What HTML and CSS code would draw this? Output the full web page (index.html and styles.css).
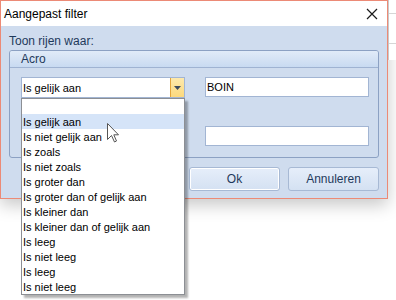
FILE: index.html
```html
<!DOCTYPE html>
<html lang="nl">
<head>
    <meta charset="UTF-8">
    <title>Aangepast filter</title>
    <link rel="stylesheet" href="styles.css">
</head>
<body>
    <div class="backwin"></div>
    <div class="dialog">
        <div class="titlebar">
            <span class="title">Aangepast filter</span>
            <svg class="close" width="12" height="12" viewBox="0 0 12 12">
                <path d="M1 1 L11 11 M11 1 L1 11" stroke="#1b1b1b" stroke-width="1.2" fill="none"/>
            </svg>
        </div>
        <div class="content">
            <div class="label">Toon rijen waar:</div>
            <div class="group">
                <div class="group-head">Acro</div>
                <div class="group-body">
                    <div class="row">
                        <div class="combo">
                            <span class="combo-text">Is gelijk aan</span>
                            <span class="combo-btn">
                                <svg width="7" height="4" viewBox="0 0 7 4"><path d="M0 0 H7 L3.5 4 Z" fill="#3d4b5e"/></svg>
                            </span>
                            <ul class="dropdown">
                                <li class="empty"></li>
                                <li class="selected">Is gelijk aan</li>
                                <li>Is niet gelijk aan</li>
                                <li>Is zoals</li>
                                <li>Is niet zoals</li>
                                <li>Is groter dan</li>
                                <li>Is groter dan of gelijk aan</li>
                                <li>Is kleiner dan</li>
                                <li>Is kleiner dan of gelijk aan</li>
                                <li>Is leeg</li>
                                <li>Is niet leeg</li>
                                <li>Is leeg</li>
                                <li>Is niet leeg</li>
                            </ul>
                        </div>
                        <div class="input">BOIN</div>
                    </div>
                    <div class="row second">
                        <div class="spacer"></div>
                        <div class="input"></div>
                    </div>
                </div>
            </div>
            <div class="buttons">
                <button class="btn default">Ok</button>
                <button class="btn">Annuleren</button>
            </div>
        </div>
    </div>
    <svg class="cursor" width="13" height="20" viewBox="0 0 13 20">
        <path d="M0.5 0.5 L0.5 16.5 L4.5 12.5 L7.5 19 L9.5 18 L6.8 11.8 L11.5 11.8 Z" fill="#fff" stroke="#555" stroke-width="1"/>
    </svg>
</body>
</html>
```

FILE: styles.css
```css
body {
    margin: 0;
    width: 396px;
    height: 300px;
    position: relative;
    overflow: hidden;
    background-color: #ffffff;
    font-family: "Liberation Sans", Arial, sans-serif;
    color: #1e2b3c;
}

/* window behind the dialog */
.backwin {
    position: absolute;
    left: 388px;
    top: 0;
    width: 8px;
    height: 60px;
    border-left: 1px solid #c9c9c9;
    background: linear-gradient(#ffffff 13px, #d6d6d6 13px, #d6d6d6 14px, #ffffff 14px, #ffffff 43px, #d6d6d6 43px, #d6d6d6 44px, #ffffff 44px);
}

.dialog {
    width: 388px;
    height: 199px;
    box-sizing: border-box;
    border: 1px solid #ec8a76;
    background-color: #cfdcee;
    box-shadow: 0 6px 16px rgba(0, 0, 0, 0.22);
    display: flex;
    flex-direction: column;
}

.titlebar {
    height: 25px;
    background-color: #ffffff;
    display: flex;
    align-items: center;
    justify-content: space-between;
    padding: 0 9px 0 3px;
}

.title {
    font-size: 12px;
    color: #000000;
}

.content {
    padding: 8px 8px 0 8px;
}

.label {
    font-size: 12px;
    color: #1e395b;
    height: 16px;
}

.group {
    height: 108px;
    box-sizing: border-box;
    border: 1px solid #8ca1c3;
    border-radius: 3px;
    background-color: #cfdcee;
}

.group-head {
    height: 17px;
    box-sizing: border-box;
    padding-left: 11px;
    font-size: 12px;
    line-height: 17px;
    color: #1e395b;
    border-bottom: 1px solid #9fb3d2;
    background: linear-gradient(#e1ebf8, #c8daf1);
    border-radius: 2px 2px 0 0;
}

.group-body {
    padding: 9px 9px 0 11px;
}

.row {
    display: flex;
    gap: 20px;
}

.row.second {
    margin-top: 28px;
}

.combo {
    position: relative;
    width: 164px;
    height: 21px;
    box-sizing: border-box;
    border: 1px solid #a2b5d3;
    background-color: #ffffff;
    display: flex;
    align-items: center;
    font-size: 11px;
}

.combo-text {
    flex: 1;
    padding-left: 1px;
    color: #000000;
}

.combo-btn {
    width: 14px;
    height: 19px;
    box-sizing: border-box;
    border-left: 1px solid #e3a53c;
    background: linear-gradient(#fde9ad, #fcd97c);
    display: flex;
    align-items: center;
    justify-content: center;
}

.spacer {
    width: 164px;
}

.input {
    width: 164px;
    height: 20px;
    box-sizing: border-box;
    border: 1px solid #a2b5d3;
    background-color: #ffffff;
    font-size: 11px;
    line-height: 18px;
    padding-left: 1px;
    color: #000000;
}

.buttons {
    display: flex;
    justify-content: flex-end;
    gap: 8px;
    margin-top: 9px;
}

.btn {
    width: 91px;
    height: 24px;
    border: 1px solid #a7b9d4;
    border-radius: 3px;
    background: linear-gradient(#e6eefa, #d4e1f2);
    font-family: "Liberation Sans", Arial, sans-serif;
    font-size: 12px;
    color: #1e395b;
    padding: 0;
}

.btn.default {
    box-shadow: inset 0 0 0 1px #ffffff;
}

/* open dropdown list over the dialog */
.dropdown {
    position: absolute;
    left: -1px;
    top: 20px;
    width: 164px;
    box-sizing: border-box;
    margin: 0;
    padding: 0;
    list-style: none;
    border: 1px solid #8c8f94;
    background-color: #ffffff;
    box-shadow: 3px 3px 2px rgba(0, 0, 0, 0.3);
    z-index: 2;
}

.dropdown li {
    height: 15px;
    line-height: 17px;
    padding-left: 1px;
    font-size: 11px;
    color: #000000;
}

.dropdown li.selected {
    background-color: #d5e4f8;
}

.cursor {
    position: absolute;
    left: 107px;
    top: 123px;
    z-index: 3;
}
```
